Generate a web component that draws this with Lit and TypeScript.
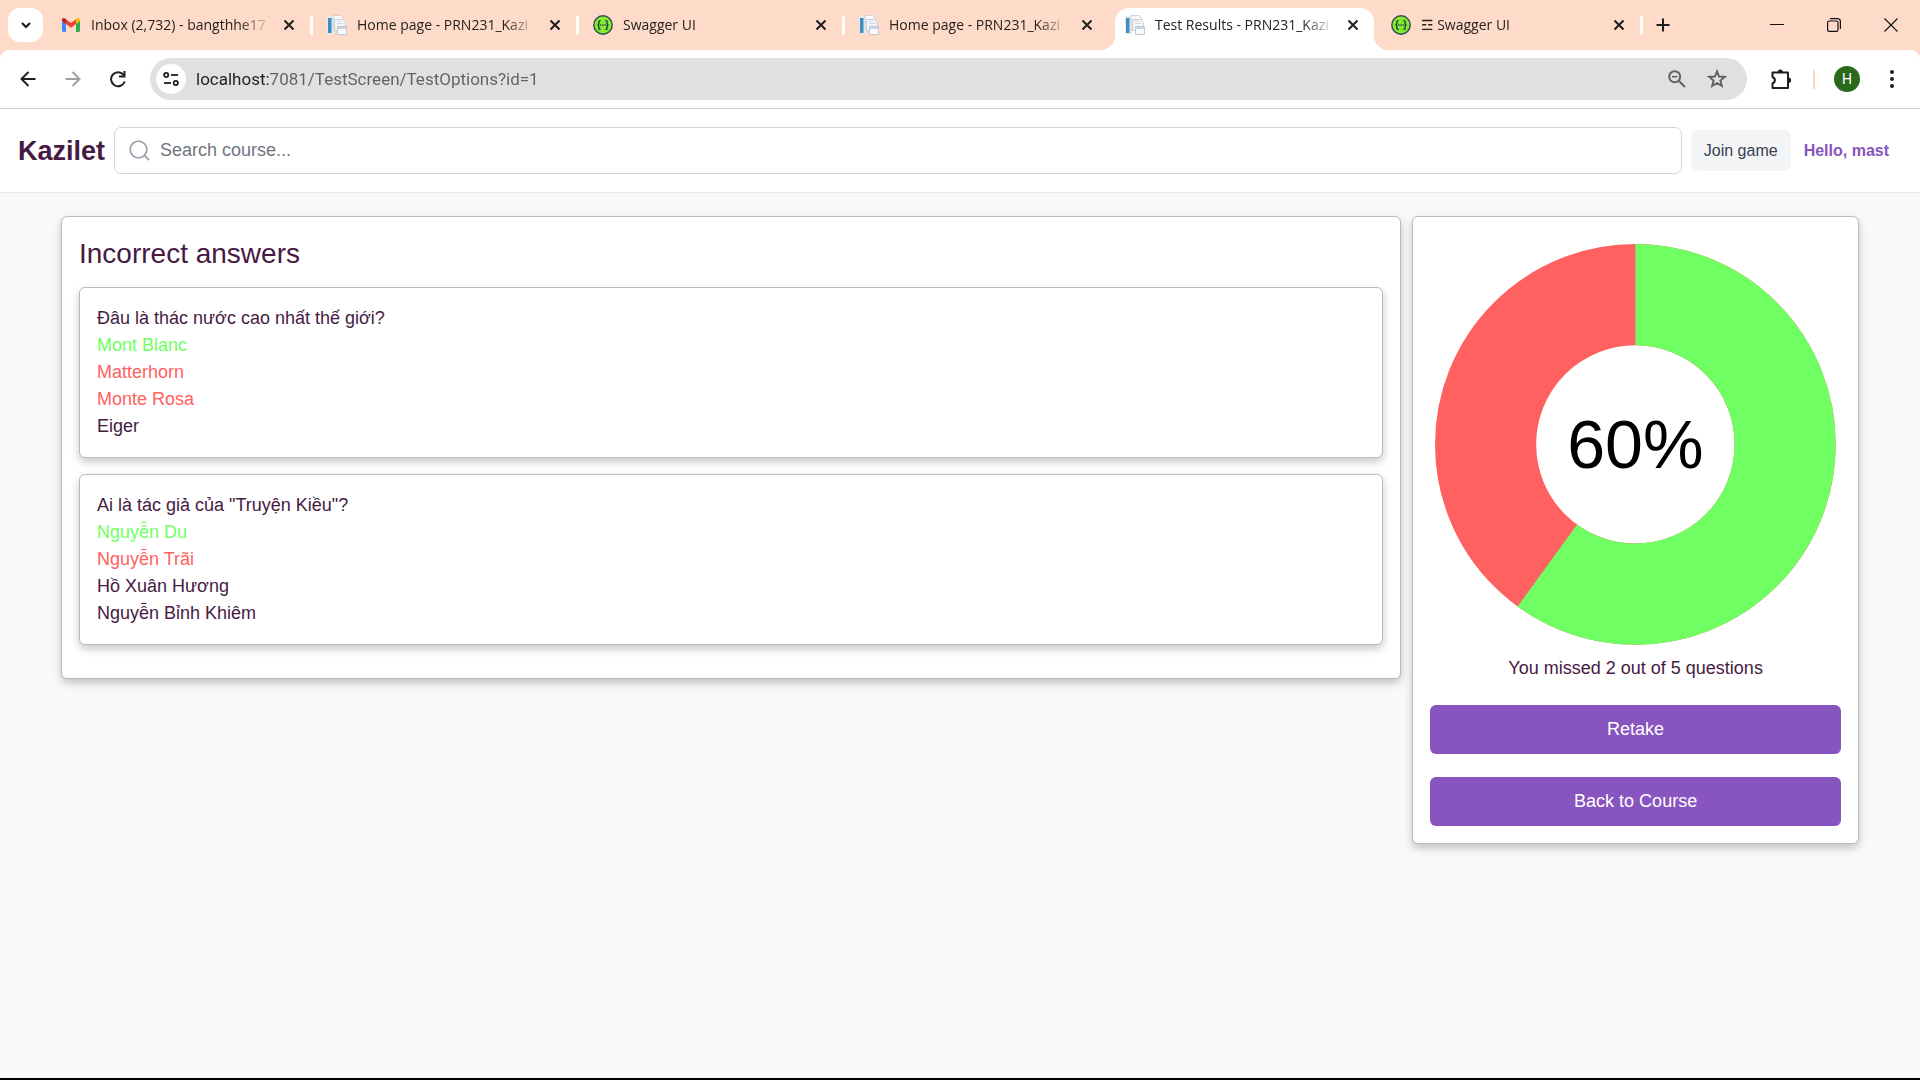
import { LitElement, html, css, svg, nothing, type TemplateResult } from "lit";
import { customElement, property } from "lit/decorators.js";
import { classMap } from "lit/directives/class-map.js";

type Favicon = "mail" | "document" | "swagger";
type Mark = "correct" | "wrong" | "plain";

interface Tab {
  icon: Favicon;
  title: string;
  active?: boolean;
}

interface Question {
  prompt: string;
  answers: { text: string; mark: Mark }[];
}

const TABS: Tab[] = [
  { icon: "mail", title: "Inbox (2,732) - bangthhe17" },
  { icon: "document", title: "Home page - PRN231_Kazi" },
  { icon: "swagger", title: "Swagger UI" },
  { icon: "document", title: "Home page - PRN231_Kazi" },
  { icon: "document", title: "Test Results - PRN231_Kazi", active: true },
  { icon: "swagger", title: "☲ Swagger UI" },
];

const QUESTIONS: Question[] = [
  {
    prompt: "Đâu là thác nước cao nhất thế giới?",
    answers: [
      { text: "Mont Blanc", mark: "correct" },
      { text: "Matterhorn", mark: "wrong" },
      { text: "Monte Rosa", mark: "wrong" },
      { text: "Eiger", mark: "plain" },
    ],
  },
  {
    prompt: 'Ai là tác giả của "Truyện Kiều"?',
    answers: [
      { text: "Nguyễn Du", mark: "correct" },
      { text: "Nguyễn Trãi", mark: "wrong" },
      { text: "Hồ Xuân Hương", mark: "plain" },
      { text: "Nguyễn Bỉnh Khiêm", mark: "plain" },
    ],
  },
];

const FAVICONS: Record<Favicon, TemplateResult> = {
  mail: html`<svg width="20" height="20" viewBox="0 0 20 20" aria-hidden="true">
    <path d="M1 5.4V15.6Q1 17 2.3 17H5V8.6L1 5.4z" fill="#4285f4" />
    <path d="M15 8.6V17h2.7Q19 17 19 15.6V5.4z" fill="#34a853" />
    <path d="M15 4.2V9l4-3V5Q19 3.3 17.4 3.1 16.6 3 15.8 3.6z" fill="#fbbc04" />
    <path d="M5 9V4.2l5 3.8 5-3.8V9l-5 3.8z" fill="#ea4335" />
    <path d="M1 5v1l4 3V4.2l-.8-.6Q3.4 3 2.6 3.1 1 3.3 1 5z" fill="#c5221f" />
  </svg>`,
  document: html`<svg width="20" height="20" viewBox="0 0 20 20" aria-hidden="true">
    <rect x="0" y="1" width="7" height="18" fill="#e6e8ea" />
    <rect x="1" y="3" width="3.500" height="15" fill="#3e8ec4" />
    <path d="M6 .5h8l2.500 3V14H6z" fill="#f6f8fa" stroke="#ccd4da" />
    <path d="M7.500 4.500h8l3 3v8h-11z" fill="#f3f6f9" stroke="#c6d0d9" />
    <path d="M10 6.500h4M10 8.500h7" stroke="#d3dbe2" />
    <path d="M10.500 11.500h9v8h-9z" fill="#f8fafb" stroke="#c0cad3" />
    <path d="M11 12h8v2h-8z" fill="#c9d5df" />
  </svg>`,
  swagger: html`<svg width="20" height="20" viewBox="0 0 20 20" aria-hidden="true">
    <circle cx="10" cy="10" r="9.200" fill="#85ea2d" stroke="#2f4a5a" stroke-width="1.400" />
    <path
      d="M7.600 5.600H7Q5.900 5.600 5.900 6.800V8.600Q5.900 9.800 4.600 10 5.900 10.200 5.900 11.400v1.800q0 1.200 1.100 1.200h.6M12.400 5.600h.6q1.100 0 1.100 1.200v1.800q0 1.200 1.300 1.400-1.300.2-1.300 1.400v1.800q0 1.200-1.100 1.200h-.6"
      fill="none" stroke="#173647" stroke-width="1.300" />
    <path d="M7.200 10h1.200M9.400 10h1.200M11.600 10h1.200" stroke="#173647" stroke-width="1.300" />
  </svg>`,
};

const FONT_UI = css`"Segoe UI", "Open Sans", "Noto Sans", "DejaVu Sans", sans-serif`;

const reset = css`
  *,
  *::before,
  *::after {
    box-sizing: border-box;
  }
  button,
  input {
    margin: 0;
    border: 0;
    padding: 0;
    background: none;
    font: inherit;
    color: inherit;
  }
  button {
    display: inline-flex;
    align-items: center;
    justify-content: center;
    cursor: pointer;
  }
  svg {
    display: block;
    flex: none;
  }
`;

@customElement("browser-tabs")
class BrowserTabs extends LitElement {
  @property({ attribute: false }) tabs: Tab[] = [];

  static styles = [
    reset,
    css`
      :host {
        display: flex;
        height: 50px;
        padding: 8px 1px 0 8px;
        background: #fddbc8;
        font: 14px/34px ${FONT_UI};
        color: #27221f;
      }
      .search-tabs {
        width: 35px;
        height: 34px;
        border-radius: 12px;
        background: #fff;
      }
      .tabs {
        display: flex;
        flex: 0 1 1596px;
        margin-left: 8px;
        min-width: 0;
      }
      .tab {
        position: relative;
        display: flex;
        flex: 1 1 0;
        min-width: 0;
        height: 42px;
        margin-right: 7px;
        padding: 0 11px 8px 10px;
        border-radius: 14px 14px 0 0;
      }
      .active {
        background: #fff;
      }
      .active::before,
      .active::after {
        content: "";
        position: absolute;
        bottom: 0;
        width: 14px;
        height: 14px;
      }
      .active::before {
        right: 100%;
        background: radial-gradient(circle at 0 0, transparent 14px, #fff 14px);
      }
      .active::after {
        left: 100%;
        background: radial-gradient(circle at 100% 0, transparent 14px, #fff 14px);
      }
      .divided::after {
        content: "";
        position: absolute;
        left: 100%;
        top: 8px;
        width: 3px;
        height: 19px;
        border-radius: 2px;
        background: #fff;
      }
      .title {
        flex: 1;
        min-width: 0;
        justify-content: flex-start;
        gap: 10px;
      }
      .label {
        flex: 1;
        min-width: 0;
        overflow: hidden;
        white-space: nowrap;
        text-align: left;
        mask-image: linear-gradient(to right, #000 calc(100% - 32px), transparent);
      }
      .close {
        width: 20px;
        margin-left: 8px;
      }
      .new-tab {
        width: 32px;
        height: 34px;
      }
      .window {
        display: flex;
        margin: -8px 0 8px auto;
      }
      .window button {
        width: 57px;
        height: 50px;
      }
    `,
  ];

  render() {
    return html`
      <button class="search-tabs" aria-label="Search tabs">
        <svg width="12" height="12" viewBox="0 0 12 12">
          <path d="M2 4l4 4 4-4" fill="none" stroke="#1f1f1f" stroke-width="2.200" />
        </svg>
      </button>
      <div class="tabs">
        ${this.tabs.map((tab, i) => {
          const divided = !tab.active && !this.tabs[i + 1]?.active;
          return html`<div class=${classMap({ tab: true, active: !!tab.active, divided })}>
            <button class="title">
              ${FAVICONS[tab.icon]}<span class="label">${tab.title}</span>
            </button>
            <button class="close" aria-label="Close tab">
              <svg width="12" height="12" viewBox="0 0 12 12">
                <path d="M1.500 1.500l9 9M10.500 1.500l-9 9" stroke="#1f1f1f" stroke-width="2" />
              </svg>
            </button>
          </div>`;
        })}
      </div>
      <button class="new-tab" aria-label="New tab">
        <svg width="14" height="14" viewBox="0 0 14 14">
          <path d="M7 .5v13M.5 7h13" stroke="#1f1f1f" stroke-width="2" />
        </svg>
      </button>
      <div class="window">
        <button aria-label="Minimize">
          <svg width="14" height="14" viewBox="0 0 14 14"><path d="M0 6.500h14" stroke="#111" /></svg>
        </button>
        <button aria-label="Restore">
          <svg width="14" height="14" viewBox="0 0 14 14">
            <g fill="none" stroke="#111" stroke-width="1.200">
              <rect x=".6" y="3" width="10.400" height="10.400" rx="1.500" />
              <path d="M3 .6h7.400q3 0 3 3V11" />
            </g>
          </svg>
        </button>
        <button aria-label="Close window">
          <svg width="14" height="14" viewBox="0 0 14 14">
            <path d="M.5.5l13 13M13.500.5l-13 13" stroke="#111" stroke-width="1.100" />
          </svg>
        </button>
      </div>
    `;
  }
}

@customElement("browser-toolbar")
class BrowserToolbar extends LitElement {
  static styles = [
    reset,
    css`
      :host {
        display: block;
        background: #fddbc8;
        font: 17px/24px Roboto, ${FONT_UI};
      }
      .bar {
        display: flex;
        align-items: center;
        height: 59px;
        padding: 0 8px 0 5px;
        border-bottom: 1px solid #c9c9c9;
        border-radius: 9px 9px 0 0;
        background: #fff;
      }
      .nav {
        width: 45px;
        height: 40px;
      }
      .address {
        display: flex;
        flex: 1;
        align-items: center;
        height: 42px;
        margin-left: 10px;
        padding: 0 10px 0 6px;
        border-radius: 21px;
        background: #e0e0e0;
      }
      .info {
        width: 30px;
        height: 30px;
        margin-right: 10px;
        border-radius: 50%;
        background: #fff;
      }
      .url {
        flex: 1;
        min-width: 0;
        height: 30px;
        outline: 0;
        color: transparent;
        background: linear-gradient(to right, #1f1f1f 73px, #5e6165 73px);
        background-clip: text;
        -webkit-background-clip: text;
      }
      .action {
        width: 40px;
        height: 40px;
      }
      .extensions {
        width: 40px;
        height: 40px;
        margin-left: 14px;
      }
      .divider {
        width: 2px;
        height: 19px;
        margin: 0 19px 0 12px;
        background: #fcd9c5;
      }
      .avatar {
        width: 26px;
        height: 26px;
        border-radius: 50%;
        background: #2b691c;
        color: #fff;
        font-size: 14px;
      }
      .menu {
        width: 40px;
        height: 40px;
        margin-left: 12px;
      }
    `,
  ];

  render() {
    return html`<div class="bar">
      <button class="nav" aria-label="Back">
        <svg width="16" height="16" viewBox="0 0 16 16">
          <path d="M15.500 8H2M8.500 1L1.500 8l7 7" fill="none" stroke="#1f1f1f" stroke-width="2" />
        </svg>
      </button>
      <button class="nav" aria-label="Forward">
        <svg width="16" height="16" viewBox="0 0 16 16">
          <path d="M.5 8H14M7.500 1l7 7-7 7" fill="none" stroke="#a0a0a0" stroke-width="2" />
        </svg>
      </button>
      <button class="nav" aria-label="Reload">
        <svg width="18" height="18" viewBox="0 0 18 18">
          <path d="M15.700 11.500A7 7 0 1 1 14.800 5.200" fill="none" stroke="#1f1f1f" stroke-width="2" />
          <path d="M15.500 1v5.500H10" fill="none" stroke="#1f1f1f" stroke-width="2" />
        </svg>
      </button>
      <div class="address">
        <button class="info" aria-label="View site information">
          <svg width="16" height="14" viewBox="0 0 16 14">
            <g fill="none" stroke="#1f1f1f" stroke-width="1.800">
              <circle cx="3.200" cy="3" r="2.100" />
              <path d="M8 3h7" />
              <circle cx="12.800" cy="11" r="2.100" />
              <path d="M1 11h7" />
            </g>
          </svg>
        </button>
        <input
          class="url"
          type="text"
          aria-label="Address and search bar"
          value="localhost:7081/TestScreen/TestOptions?id=1"
        />
        <button class="action" aria-label="Zoom">
          <svg width="18" height="18" viewBox="0 0 18 18">
            <g fill="none" stroke="#5f6062" stroke-width="2">
              <circle cx="6.700" cy="6.700" r="5.500" />
              <path d="M10.700 10.700l6.300 6.300" />
              <path d="M4 6.700h5.400" stroke-width="1.600" />
            </g>
          </svg>
        </button>
        <button class="action" aria-label="Bookmark this page">
          <svg width="20" height="20" viewBox="0 0 20 20">
            <path
              d="M10 2.300l2.100 5.200 5.600.4-4.300 3.600 1.400 5.500L10 14l-4.800 3 1.400-5.500L2.300 7.900l5.600-.4z"
              fill="none" stroke="#5f6062" stroke-width="1.900" />
          </svg>
        </button>
      </div>
      <button class="extensions" aria-label="Extensions">
        <svg width="22" height="22" viewBox="0 0 22 22">
          <path
            d="M2.500 4.500h15.500v15.500h-15.500v-4.600q2.400-1 2.400-3.200t-2.400-3.200z"
            fill="none" stroke="#1f1f1f" stroke-width="2" stroke-linejoin="round" />
          <path d="M7.700 4a2.600 2.600 0 0 1 5.200 0zM18.500 9.600a2.600 2.600 0 0 1 0 5.200z" fill="#1f1f1f" />
        </svg>
      </button>
      <span class="divider"></span>
      <button class="avatar" aria-label="Profile">H</button>
      <button class="menu" aria-label="Menu">
        <svg width="4" height="18" viewBox="0 0 4 18">
          <g fill="#1f1f1f"><circle cx="2" cy="2" r="2" /><circle cx="2" cy="9" r="2" /><circle cx="2" cy="16" r="2" /></g>
        </svg>
      </button>
    </div>`;
  }
}

@customElement("site-header")
class SiteHeader extends LitElement {
  static styles = [
    reset,
    css`
      :host {
        display: flex;
        align-items: center;
        gap: 9px;
        height: 84px;
        padding: 0 18px;
        border-bottom: 1px solid #e5e7eb;
        background: #fff;
      }
      a {
        color: inherit;
        text-decoration: none;
      }
      .brand {
        font-size: 27px;
        line-height: 36px;
        font-weight: 700;
      }
      .search {
        display: flex;
        flex: 1;
        align-items: center;
        gap: 10px;
        height: 47px;
        padding: 0 14px;
        border: 1px solid #d1d5db;
        border-radius: 7px;
      }
      .query {
        flex: 1;
        min-width: 0;
        height: 27px;
        outline: 0;
      }
      .query::placeholder {
        color: #70757f;
        opacity: 1;
      }
      .join {
        height: 41px;
        padding: 0 13px;
        border-radius: 7px;
        background: #f3f4f6;
        color: #374151;
        font-size: 16px;
      }
      .hello {
        padding: 0 13px 0 4px;
        color: #8854c0;
        font-size: 16px;
        font-weight: 700;
      }
    `,
  ];

  render() {
    return html`
      <a class="brand" href="#">Kazilet</a>
      <label class="search">
        <svg width="21" height="21" viewBox="0 0 21 21" aria-hidden="true">
          <circle cx="9.500" cy="9.500" r="8.300" fill="none" stroke="#9ca3af" stroke-width="1.800" />
          <path d="M15 15l5 5" stroke="#9ca3af" stroke-width="1.800" />
        </svg>
        <input class="query" type="text" aria-label="Search course" placeholder="Search course..." />
      </label>
      <button class="join">Join game</button>
      <a class="hello" href="#">Hello, mast</a>
    `;
  }
}

@customElement("score-chart")
class ScoreChart extends LitElement {
  @property({ type: Number }) correct = 0;
  @property({ type: Number }) total = 1;

  static styles = css`
    :host {
      display: block;
      padding: 10px 5px;
    }
    svg {
      display: block;
      width: 100%;
    }
    .ring {
      fill: none;
      stroke-width: 101;
    }
    .missed {
      stroke: #ff6161;
    }
    .correct {
      stroke: #6fff62;
    }
    .percent {
      fill: #000;
      font-size: 68px;
      text-anchor: middle;
    }
  `;

  render() {
    const share = (this.correct / this.total) * 100;
    return html`<svg viewBox="0 0 400 400" role="img" aria-label="Score">
      <circle class="ring missed" cx="200" cy="200" r="149.500" />
      ${share > 0
        ? svg`<circle class="ring correct" cx="200" cy="200" r="149.500" pathLength="100"
            stroke-dasharray="${share} 100" transform="rotate(-90 200 200)" />`
        : nothing}
      <text class="percent" x="200" y="224">${Math.round(share)}%</text>
    </svg>`;
  }
}

@customElement("app-root")
class AppRoot extends LitElement {
  static styles = [
    reset,
    css`
      :host {
        display: flex;
        flex-direction: column;
        box-sizing: border-box;
        min-height: 100vh;
        border-bottom: 2px solid #000;
        background: #f9f9f9;
        color: #461a42;
        font: 18px/27px "Liberation Sans", Arial, sans-serif;
      }
      .results {
        display: grid;
        grid-template-columns: 3fr 1fr;
        align-items: start;
        gap: 11px;
        padding: 23px 61px;
      }
      .card {
        padding: 17px;
        border: 1px solid #bababa;
        border-radius: 6px;
        background: #fff;
        box-shadow: 0 4px 9px rgba(0, 0, 0, 0.22);
      }
      .heading {
        margin: 0 0 13px;
        font-size: 28px;
        line-height: 40px;
        font-weight: 400;
      }
      .question {
        margin-bottom: 16px;
      }
      .prompt,
      .summary {
        margin: 0;
      }
      .answers {
        margin: 0;
        padding: 0;
        list-style: none;
      }
      .correct {
        color: #6fff62;
      }
      .wrong {
        color: #ff6161;
      }
      .score {
        display: flex;
        flex-direction: column;
      }
      .summary {
        text-align: center;
      }
      .action {
        height: 49px;
        margin-top: 23px;
        border-radius: 6px;
        background: #8854c0;
        color: #fff;
      }
    `,
  ];

  render() {
    const total = 5;
    const missed = QUESTIONS.length;
    return html`
      <browser-tabs .tabs=${TABS}></browser-tabs>
      <browser-toolbar></browser-toolbar>
      <site-header></site-header>
      <main class="results">
        <section class="card">
          <h1 class="heading">Incorrect answers</h1>
          ${QUESTIONS.map(
            (q) => html`<article class="card question">
              <p class="prompt">${q.prompt}</p>
              <ul class="answers">
                ${q.answers.map((a) => html`<li class=${a.mark}>${a.text}</li>`)}
              </ul>
            </article>`
          )}
        </section>
        <aside class="card score">
          <score-chart .correct=${total - missed} .total=${total}></score-chart>
          <p class="summary">You missed ${missed} out of ${total} questions</p>
          <button class="action">Retake</button>
          <button class="action">Back to Course</button>
        </aside>
      </main>
    `;
  }
}
